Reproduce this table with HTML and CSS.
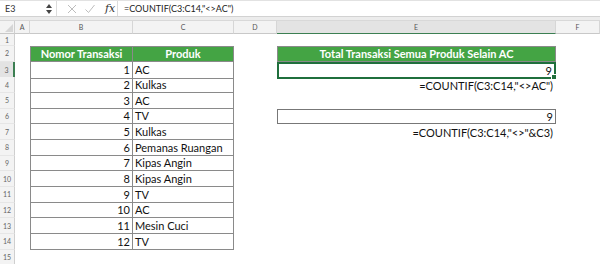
FILE: index.html
```html
<!DOCTYPE html>
<html>
<head>
<meta charset="utf-8">
<link rel="stylesheet" href="styles.css">
</head>
<body>
<div class="app">
  <div class="fbar">
    <div class="namebox">
      <span class="ref">E3</span>
      <svg class="spin" width="6" height="10" viewBox="0 0 6 10"><polygon points="3,0 6,4 0,4" fill="#444"/><polygon points="0,6 6,6 3,10" fill="#444"/></svg>
    </div>
    <div class="fbtns">
      <svg class="ico" width="10" height="10" viewBox="0 0 10 10"><path d="M1 1 L9 9 M9 1 L1 9" stroke="#bdbdbd" stroke-width="1" fill="none"/></svg>
      <svg class="ico" width="10" height="10" viewBox="0 0 10 10"><path d="M0.5 5.5 L3.5 8.5 L9.5 1" stroke="#bdbdbd" stroke-width="1" fill="none"/></svg>
      <span class="fx">fx</span>
    </div>
    <div class="formula">=COUNTIF(C3:C14,"&lt;&gt;AC")</div>
  </div>
  <div class="band"></div>
  <div class="sheet">
    <div class="row hdr">
      <div class="corner"><svg width="8" height="8" viewBox="0 0 8 8"><polygon points="8,0 8,8 0,8" fill="#d6d6d6"/></svg></div>
      <div class="ch">A</div><div class="ch">B</div><div class="ch">C</div><div class="ch">D</div><div class="ch sel">E</div><div class="ch">F</div>
    </div>
    <div class="row r1">
      <div class="rh">1</div><div></div><div></div><div></div><div></div><div></div><div></div>
    </div>
    <div class="row">
      <div class="rh">2</div><div></div>
      <div class="tb th top">Nomor Transaksi</div><div class="tc th top">Produk</div>
      <div></div><div class="eh">Total Transaksi Semua Produk Selain AC</div><div></div>
    </div>
    <div class="row">
      <div class="rh sel">3</div><div></div>
      <div class="tb num">1</div><div class="tc txt">AC</div>
      <div></div><div class="val active">9</div><div></div>
    </div>
    <div class="row">
      <div class="rh">4</div><div></div>
      <div class="tb num">2</div><div class="tc txt">Kulkas</div>
      <div></div><div class="note">=COUNTIF(C3:C14,"&lt;&gt;AC")</div><div></div>
    </div>
    <div class="row">
      <div class="rh">5</div><div></div>
      <div class="tb num">3</div><div class="tc txt">AC</div>
      <div></div><div></div><div></div>
    </div>
    <div class="row">
      <div class="rh">6</div><div></div>
      <div class="tb num">4</div><div class="tc txt">TV</div>
      <div></div><div class="val boxed">9</div><div></div>
    </div>
    <div class="row">
      <div class="rh">7</div><div></div>
      <div class="tb num">5</div><div class="tc txt">Kulkas</div>
      <div></div><div class="note">=COUNTIF(C3:C14,"&lt;&gt;"&amp;C3)</div><div></div>
    </div>
    <div class="row">
      <div class="rh">8</div><div></div>
      <div class="tb num">6</div><div class="tc txt">Pemanas Ruangan</div>
      <div></div><div></div><div></div>
    </div>
    <div class="row">
      <div class="rh">9</div><div></div>
      <div class="tb num">7</div><div class="tc txt">Kipas Angin</div>
      <div></div><div></div><div></div>
    </div>
    <div class="row">
      <div class="rh">10</div><div></div>
      <div class="tb num">8</div><div class="tc txt">Kipas Angin</div>
      <div></div><div></div><div></div>
    </div>
    <div class="row">
      <div class="rh">11</div><div></div>
      <div class="tb num">9</div><div class="tc txt">TV</div>
      <div></div><div></div><div></div>
    </div>
    <div class="row">
      <div class="rh">12</div><div></div>
      <div class="tb num">10</div><div class="tc txt">AC</div>
      <div></div><div></div><div></div>
    </div>
    <div class="row">
      <div class="rh">13</div><div></div>
      <div class="tb num">11</div><div class="tc txt">Mesin Cuci</div>
      <div></div><div></div><div></div>
    </div>
    <div class="row">
      <div class="rh">14</div><div></div>
      <div class="tb num">12</div><div class="tc txt">TV</div>
      <div></div><div></div><div></div>
    </div>
    <div class="row">
      <div class="rh">15</div><div></div><div></div><div></div><div></div><div></div><div></div>
    </div>
  </div>
</div>
</body>
</html>
```

FILE: styles.css
```css
* { box-sizing: border-box; }
html, body { margin: 0; padding: 0; background: #fff; }
body { width: 600px; height: 264px; overflow: hidden; font-family: Lato, "Open Sans", sans-serif; }

.app { width: 600px; }

.fbar {
  display: flex;
  align-items: center;
  height: 17px;
  border-top: 1px solid #e2e2e2;
  border-bottom: 1px solid #d2d2d2;
  background: #fff;
}
.namebox {
  width: 57px;
  height: 100%;
  display: flex;
  align-items: center;
  justify-content: space-between;
  padding: 0 4px 0 5px;
  border-right: 1px solid #dcdcdc;
}
.ref { font-size: 9px; color: #333; }
.spin { display: block; }
.fbtns {
  width: 61px;
  height: 100%;
  display: flex;
  align-items: center;
  gap: 8px;
  padding-left: 10px;
  border-right: 1px solid #dcdcdc;
}
.fbtns .ico { display: block; }
.fx {
  font-family: "DejaVu Serif", "Liberation Serif", serif;
  font-style: italic;
  font-size: 11px;
  color: #333;
  margin-left: 2px;
}
.formula { padding-left: 6px; font-size: 9px; color: #222; }

.band { height: 4px; background: #ececec; border-bottom: 1px solid #d8d8d8; }

.row {
  display: grid;
  grid-template-columns: 15px 15px 103px 101px 43px 279px 44px;
  height: 15.67px;
}
.row.hdr { height: 13px; }
.row.r1 { height: 12px; }
.row > div { display: flex; align-items: center; min-width: 0; white-space: nowrap; }

.corner {
  background: #f3f3f3;
  border-right: 1px solid #cfcfcf;
  border-bottom: 1px solid #c8c8c8;
  justify-content: flex-end;
  align-items: flex-end !important;
  padding: 0 1px 1px 0;
}
.ch {
  justify-content: center;
  background: #f3f3f3;
  border-right: 1px solid #d6d6d6;
  border-bottom: 1px solid #c8c8c8;
  font-size: 7px;
  color: #555;
}
.ch.sel { background: #e3e3e3; border-bottom: 1px solid #3c7f52; }
.rh {
  justify-content: center;
  background: #f3f3f3;
  border-right: 1px solid #cfcfcf;
  border-bottom: 1px solid #e6e6e6;
  font-size: 7px;
  color: #666;
}
.rh.sel { background: #e3e3e3; border-right: 2px solid #3c7f52; }

.tb { border-left: 1px solid #8a8a8a; border-right: 1px solid #8a8a8a; border-bottom: 1px solid #8a8a8a; }
.tc { border-right: 1px solid #8a8a8a; border-bottom: 1px solid #8a8a8a; }
.top { border-top: 1px solid #8a8a8a; }

.th {
  justify-content: center;
  background: #44a444;
  color: #fff;
  font-weight: bold;
  font-size: 11px;
}
.eh {
  justify-content: center;
  background: #44a444;
  color: #fff;
  font-weight: bold;
  font-size: 11px;
  border: 1px solid #8a8a8a;
}
.num { justify-content: flex-end; padding-right: 2px; font-size: 11px; color: #111; }
.txt { padding-left: 2px; font-size: 11px; color: #111; }

.val { justify-content: flex-end; padding-right: 2px; font-size: 11px; color: #111; }
.val.active { position: relative; border: 2px solid #1f6f3c; }
.val.active::after {
  content: "";
  position: absolute;
  right: -3px;
  bottom: -3px;
  width: 4px;
  height: 4px;
  background: #1f6f3c;
  border: 1px solid #fff;
}
.val.boxed { border: 1px solid #777; }
.note { justify-content: flex-end; padding-right: 3px; font-size: 11px; color: #111; }
```
